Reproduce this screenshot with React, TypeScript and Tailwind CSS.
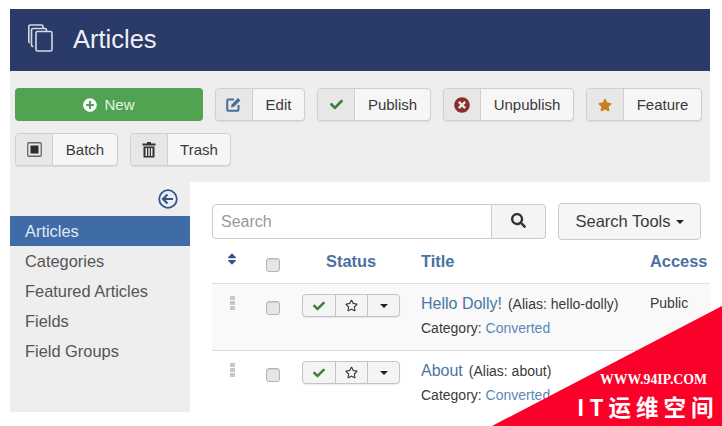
import { FaCheck, FaPlusCircle, FaRegStar, FaSearch, FaSort, FaStar, FaTimesCircle } from "react-icons/fa";

function ToolBtn({ icon, label, w }: { icon: React.ReactNode; label: string; w: string }) {
  return (
    <div className={`flex h-[33px] ${w} rounded-[4px] border border-[#cfcfcf] bg-[#f6f6f6] text-[15px] text-[#3a3a3a] shadow-[0_1px_1px_rgba(0,0,0,0.08)]`}>
      <span className="flex w-[37px] shrink-0 items-center justify-center rounded-l-[4px] border-r border-[#cfcfcf] bg-[#e7e7e7]">{icon}</span>
      <span className="flex flex-1 items-center justify-center pt-[1px]">{label}</span>
    </div>
  );
}

function EditIcon() {
  return (
    <svg width="16" height="15" viewBox="0 0 16 15" fill="none">
      <path d="M8 2.5H2.2a1 1 0 0 0-1 1v9.3a1 1 0 0 0 1 1h9.3a1 1 0 0 0 1-1V8" stroke="#47709a" strokeWidth="2" />
      <path d="M5 10.5 5.6 7.4 12 1l2.4 2.4-6.4 6.4z" fill="#47709a" />
    </svg>
  );
}

function Trash() {
  return (
    <svg width="14" height="16" viewBox="0 0 14 16" fill="#333">
      <path d="M5 0h4v1.5h4.5V3.5H.5V1.5H5z" />
      <path d="M1.5 4.5h11V15.5H1.5zM3.5 6v8h1.5V6zM6.3 6v8h1.5V6zM9 6v8h1.5V6z" fillRule="evenodd" />
    </svg>
  );
}

function Batch() {
  return (
    <svg width="15" height="15" viewBox="0 0 15 15">
      <rect x="0.75" y="0.75" width="13.5" height="13.5" rx="1" fill="none" stroke="#666" strokeWidth="1.3" />
      <rect x="3.5" y="3.5" width="8" height="8" fill="#2c2c2c" />
    </svg>
  );
}

function Check() {
  return <span className="block size-[14px] rounded-[3px] border border-[#b5b5b5] bg-[#e6e6e6] shadow-[inset_0_1px_1px_rgba(0,0,0,0.1)]" />;
}

function Handle() {
  return (
    <span className="flex flex-col gap-[1px]">
      {[0, 1, 2].map((i) => (
        <span key={i} className="block h-[4px] w-[5px] bg-[#c8c8c8]" />
      ))}
    </span>
  );
}

function StatusGroup() {
  return (
    <div className="flex h-[23px] w-[98px] rounded-[4px] border border-[#c4c4c4] bg-[#f4f4f4] text-[#333] shadow-[0_1px_1px_rgba(0,0,0,0.08)]">
      <span className="flex w-[33px] items-center justify-center border-r border-[#c4c4c4]">
        <FaCheck className="text-[12px] text-[#378137]" />
      </span>
      <span className="flex w-[32px] items-center justify-center border-r border-[#c4c4c4]">
        <FaRegStar className="text-[13px] text-[#333]" />
      </span>
      <span className="flex flex-1 items-center justify-center">
        <span className="block border-x-[4.5px] border-t-[4.5px] border-x-transparent border-t-[#222]" />
      </span>
    </div>
  );
}

function Row({ title, alias, bg, h, access }: { title: string; alias: string; bg: string; h: string; access?: string }) {
  return (
    <div className={`flex ${h} border-t border-[#dddddd] ${bg}`}>
      <div className="flex w-[40px] justify-center pt-[12px]">
        <Handle />
      </div>
      <div className="flex w-[42px] justify-center pt-[17px]">
        <Check />
      </div>
      <div className="w-[127px] pt-[10px] pl-[8px]">
        <StatusGroup />
      </div>
      <div className="w-[229px] pt-[10px] text-[#3a3a3a]">
        <div className="flex items-baseline gap-[6px] whitespace-nowrap leading-[20px]">
          <span className="text-[16px] text-[#4a76a3]">{title}</span>
          <span className="text-[14px]">(Alias: {alias})</span>
        </div>
        <div className="mt-[5px] text-[14px] leading-[18px]">
          Category: <span className="text-[#5a88b4]">Converted</span>
        </div>
      </div>
      {access && <div className="pt-[9px] text-[14px] leading-[20px] text-[#3a3a3a]">{access}</div>}
    </div>
  );
}

export default function App() {
  const sideItems = ["Categories", "Featured Articles", "Fields", "Field Groups"];
  return (
    <div className="relative h-[426px] w-[722px] overflow-hidden bg-white pt-[9px] pl-[10px] font-['Liberation_Sans',Arial,sans-serif]">
      <div className="w-[700px]">
        <header className="flex h-[62px] items-center bg-[#2a3a69] pl-[18px] text-white">
          <svg className="mb-[5px]" width="25" height="28" viewBox="0 0 25 28" fill="none" stroke="#d5d9e4" strokeWidth="1.6">
            <rect x="8" y="7.5" width="16" height="19.5" rx="1.5" />
            <path d="M5.5 22.5H5a1.5 1.5 0 0 1-1.5-1.5V6A1.5 1.5 0 0 1 5 4.5h12A1.5 1.5 0 0 1 18.5 6v1" />
            <path d="M2 18.5H1.8A1 1 0 0 1 .8 17.5V2.5A1.5 1.5 0 0 1 2.3 1h11.2a1.5 1.5 0 0 1 1.5 1.5V4" />
          </svg>
          <h1 className="ml-[20px] text-[25.5px] leading-none font-normal text-[#eef0f5]">Articles</h1>
        </header>

        <div className="h-[110px] bg-[#eeeeee] pt-[17px] pl-[5px]">
          <div className="flex gap-[12px]">
            <div className="flex h-[33px] w-[188px] items-center justify-center gap-[7px] rounded-[4px] bg-[#51a351] pt-[1px] text-[15px] text-[#e6f3e6]">
              <FaPlusCircle className="text-[14px] text-white" />
              New
            </div>
            <ToolBtn w="w-[90px]" label="Edit" icon={<EditIcon />} />
            <ToolBtn w="w-[114px]" label="Publish" icon={<FaCheck className="text-[13px] text-[#378137]" />} />
            <ToolBtn w="w-[131px]" label="Unpublish" icon={<FaTimesCircle className="text-[16px] text-[#8c2d2d]" />} />
            <ToolBtn w="w-[116px]" label="Feature" icon={<FaStar className="text-[14px] text-[#c9801f]" />} />
          </div>
          <div className="mt-[12px] flex gap-[12px]">
            <ToolBtn w="w-[103px]" label="Batch" icon={<Batch />} />
            <ToolBtn w="w-[101px]" label="Trash" icon={<Trash />} />
          </div>
        </div>

        <div className="flex h-[231px] bg-[#eeeeee]">
          <aside className="w-[180px] shrink-0 pt-[8px] text-[16.4px] text-[#555]">
            <div className="flex h-[27px] justify-end pr-[12px]">
              <svg width="20" height="20" viewBox="0 0 20 20" fill="none" stroke="#34558b" strokeWidth="1.8">
                <circle cx="10" cy="10" r="8.8" />
                <path d="M15 10H5.5M9.5 5.5 5 10l4.5 4.5" strokeWidth="2.2" />
              </svg>
            </div>
            <div className="flex h-[30px] items-center bg-[#3f6ca6] pt-[1px] pl-[15px] text-[#e0e8f2]">Articles</div>
            <nav>
              {sideItems.map((s) => (
                <div key={s} className="flex h-[30px] items-center pt-[1px] pl-[15px]">{s}</div>
              ))}
            </nav>
          </aside>

          <main className="mt-[1px] min-w-0 flex-1 overflow-hidden bg-white pl-[22px]">
            <div className="flex items-center pt-[21px]">
              <div className="flex h-[35px] w-[280px] items-center rounded-l-[4px] border border-[#cccccc] pl-[8px] text-[16px] text-[#999]">Search</div>
              <div className="flex h-[35px] w-[54px] items-center justify-center rounded-r-[4px] border border-l-0 border-[#cccccc] bg-[#f4f4f4]">
                <FaSearch className="mb-[3px] text-[15px] text-[#333]" />
              </div>
              <div className="ml-[12px] flex h-[37px] w-[143px] items-center justify-center gap-[5px] rounded-[4px] border border-[#cccccc] bg-[#f6f6f6] text-[16.5px] text-[#3a3a3a]">
                Search Tools
                <span className="block border-x-[4px] border-t-[4px] border-x-transparent border-t-[#222]" />
              </div>
            </div>

            <div className="mt-[6px] flex h-[37px] text-[16.4px] font-bold text-[#4a719f]">
              <div className="flex w-[40px] justify-center pt-[6px] text-[#33558c]">
                <FaSort className="text-[14px]" />
              </div>
              <div className="flex w-[42px] justify-center pt-[12px]">
                <Check />
              </div>
              <div className="w-[127px] pt-[5px] pl-[32px] leading-[20px]">Status</div>
              <div className="w-[229px] pt-[5px] leading-[20px]">Title</div>
              <div className="pt-[5px] leading-[20px]">Access</div>
            </div>

            <Row title="Hello Dolly!" alias="hello-dolly" bg="bg-[#f9f9f9]" h="h-[67px]" access="Public" />
            <Row title="About" alias="about" bg="bg-white" h="h-[62px]" />
          </main>
        </div>
      </div>

      <svg className="absolute top-[306px] left-[492px]" width="230" height="120" viewBox="0 0 230 120">
        <polygon points="230,0 230,120 0,120" fill="#fb0028" />
      </svg>
      <div className="absolute top-[372px] left-[600px] font-['Liberation_Serif',serif] text-[13.8px] leading-[16px] font-bold text-white">WWW.94IP.COM</div>
      <div className="absolute top-[388px] left-[577px] font-['Noto_Sans_CJK_SC','Noto_Sans',sans-serif] text-[22.5px] leading-[36px] font-bold tracking-[5px] whitespace-nowrap text-white">IT运维空间</div>
    </div>
  );
}
